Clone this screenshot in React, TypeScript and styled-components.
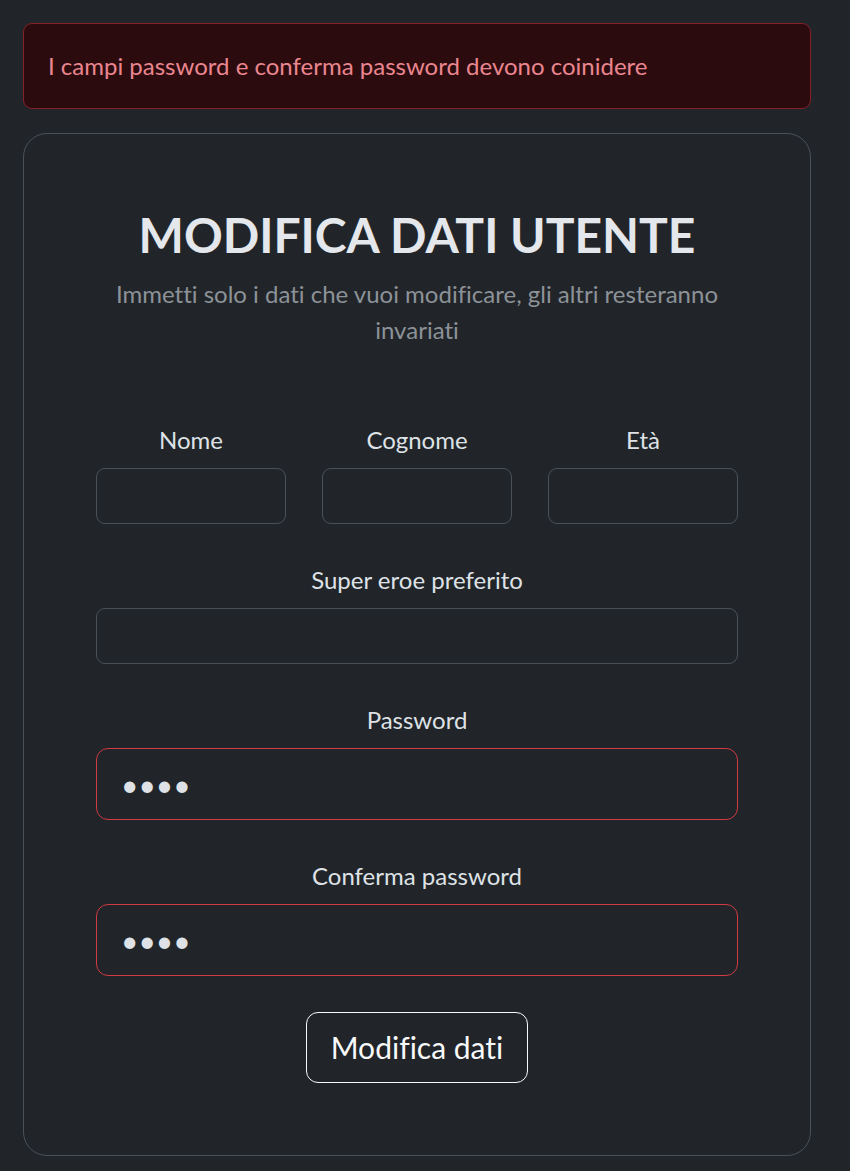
import React from 'react';
import styled, { createGlobalStyle } from 'styled-components';

const GlobalStyle = createGlobalStyle`
  html, body {
    margin: 0;
    padding: 0;
    background: #212529;
  }
  body {
    font-family: 'Segoe UI', Lato, 'Noto Sans', sans-serif;
    color: #dee2e6;
    font-size: 24px;
    line-height: 1.5;
  }
  * {
    box-sizing: border-box;
    font-variant-ligatures: none;
    font-feature-settings: 'liga' 0, 'clig' 0, 'dlig' 0;
  }
`;

// contenitore della pagina
const Page = styled.div`
  padding: 23px 39px 16px 23px;
`;

const Alert = styled.div`
  background: #2c0b0e;
  border: 1px solid #842029;
  color: #ea868f;
  border-radius: 9px;
  padding: 24px;
  margin-bottom: 24px;
`;

const Card = styled.div`
  border: 1px solid #495057;
  border-radius: 24px;
  padding: 72px;
  text-align: center;
`;

const Title = styled.h2`
  margin: 0 0 12px;
  font-size: 48px;
  font-weight: 700;
  line-height: 1.2;
  color: #e4e7eb;
`;

const Subtitle = styled.p`
  margin: 0 0 72px;
  color: #8c9298;
  font-size: 24px;
`;

const Grid = styled.div`
  display: grid;
  grid-template-columns: repeat(3, 1fr);
  gap: 36px;
  margin-bottom: 36px;
`;

const Field = styled.div`
  margin-bottom: 36px;
`;

const Label = styled.label`
  display: block;
  padding-top: 2px;
  margin-bottom: 10px;
  color: #dee2e6;
`;

const Input = styled.input<{ $lg?: boolean; $invalid?: boolean }>`
  display: block;
  width: 100%;
  height: ${(p) => (p.$lg ? '72px' : '56px')};
  padding: ${(p) => (p.$lg ? '0 24px' : '0 18px')};
  font-family: inherit;
  font-size: ${(p) => (p.$lg ? '30px' : '24px')};
  color: #dee2e6;
  background: #212529;
  border: 1px solid ${(p) => (p.$invalid ? '#d03a43' : '#495057')};
  border-radius: ${(p) => (p.$lg ? '12px' : '9px')};
  outline: none;
`;

const Button = styled.button`
  height: 71px;
  font-family: inherit;
  font-size: 30px;
  line-height: 1.5;
  padding: 0 24px;
  color: #f8f9fa;
  background: transparent;
  border: 1px solid #f8f9fa;
  border-radius: 12px;
`;

export default function App() {
  return (
    <Page>
      <GlobalStyle />
      <Alert>I campi password e conferma password devono coinidere</Alert>
      <Card>
        <Title>MODIFICA DATI UTENTE</Title>
        <Subtitle>
          Immetti solo i dati che vuoi modificare, gli altri resteranno invariati
        </Subtitle>
        <Grid>
          <div>
            <Label>Nome</Label>
            <Input type="text" />
          </div>
          <div>
            <Label>Cognome</Label>
            <Input type="text" />
          </div>
          <div>
            <Label>Età</Label>
            <Input type="number" />
          </div>
        </Grid>
        <Field>
          <Label>Super eroe preferito</Label>
          <Input type="text" />
        </Field>
        <Field>
          <Label>Password</Label>
          <Input type="password" defaultValue="abcd" $lg $invalid />
        </Field>
        <Field>
          <Label>Conferma password</Label>
          <Input type="password" defaultValue="abcd" $lg $invalid />
        </Field>
        <Button type="submit">Modifica dati</Button>
      </Card>
    </Page>
  );
}
